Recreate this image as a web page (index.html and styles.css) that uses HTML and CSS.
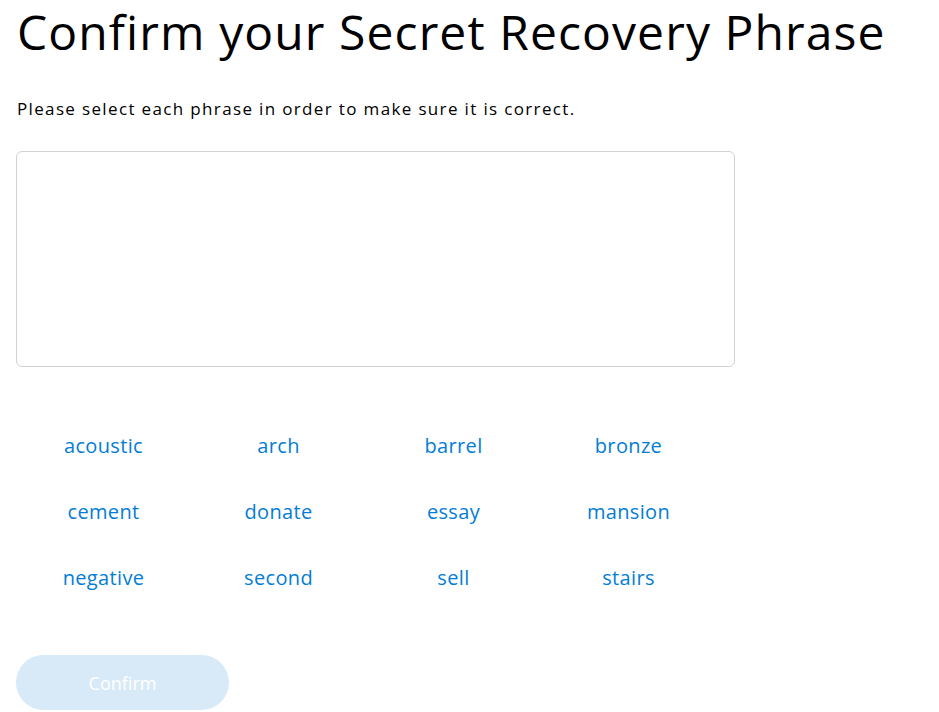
FILE: index.html
```html
<!DOCTYPE html>
<html lang="en">
<head>
<meta charset="utf-8">
<title>Confirm your Secret Recovery Phrase</title>
<link rel="stylesheet" href="styles.css">
</head>
<body>
<main class="page">
  <h1 class="title">Confirm your Secret Recovery Phrase</h1>
  <p class="intro">Please select each phrase in order to make sure it is correct.</p>
  <div class="selected-box"></div>
  <div class="word-grid">
    <button class="word">acoustic</button>
    <button class="word">arch</button>
    <button class="word">barrel</button>
    <button class="word">bronze</button>
    <button class="word">cement</button>
    <button class="word">donate</button>
    <button class="word">essay</button>
    <button class="word">mansion</button>
    <button class="word">negative</button>
    <button class="word">second</button>
    <button class="word">sell</button>
    <button class="word">stairs</button>
  </div>
  <button class="confirm" disabled>Confirm</button>
</main>
</body>
</html>
```

FILE: styles.css
```css
* { box-sizing: border-box; }
html, body { margin: 0; padding: 0; background: #fff; }
body { font-family: "Open Sans", "Lato", sans-serif; color: #000; }
.page { padding: 4px 16px 0 16px; display: flex; flex-direction: column; align-items: flex-start; }
.title {
  margin: 0;
  font-weight: 400;
  font-size: 48px;
  line-height: 56px;
  letter-spacing: 1.1px;
  padding-left: 1px;
}
.intro {
  margin: 37px 0 0 0;
  font-size: 17px;
  line-height: 24px;
  letter-spacing: 1.35px;
  padding-left: 1px;
}
.selected-box {
  margin-top: 30px;
  width: 719px;
  height: 216px;
  border: 1px solid #d2d2d2;
  border-radius: 6px;
}
.word-grid {
  margin-top: 45px;
  width: 700px;
  display: grid;
  grid-template-columns: repeat(4, 175px);
  grid-auto-rows: 66px;
}
.word {
  background: none;
  border: 0;
  padding: 0;
  height: 66px;
  font-family: inherit;
  font-size: 20px;
  letter-spacing: 0.35px;
  color: #037dd6;
  cursor: pointer;
}
.confirm {
  margin-top: 45px;
  width: 213px;
  height: 55px;
  border: 0;
  border-radius: 28px;
  background: #d8eaf8;
  color: #fff;
  font-family: inherit;
  font-size: 18px;
}
```
